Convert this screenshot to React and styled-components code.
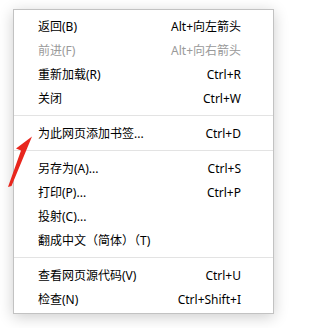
import React from "react";
import styled, { createGlobalStyle } from "styled-components";

const Global = createGlobalStyle`
  html, body { margin: 0; padding: 0; background: #ffffff; }
  body { font-family: "Noto Sans", "Noto Sans CJK SC", sans-serif; }
`;

const Stage = styled.div`
  position: relative;
  width: 285px;
  height: 328px;
  padding: 9px 0 0 13px;
  box-sizing: border-box;
  background: #ffffff;
`;

const Menu = styled.div`
  width: 261px;
  box-sizing: border-box;
  background: #ffffff;
  border: 1px solid #c2c2c2;
  box-shadow: 0 3px 14px rgba(0, 0, 0, 0.2);
  padding: 4px 0 2px 0;
  display: flex;
  flex-direction: column;
`;

const Item = styled.div`
  height: 24px;
  display: flex;
  align-items: center;
  justify-content: space-between;
  padding: 0 32px 0 24px;
  font-size: 12px;
  color: ${(p) => (p.$disabled ? "#9a9a9a" : "#000000")};
  white-space: nowrap;
`;

const Label = styled.span``;
const Shortcut = styled.span``;

const Separator = styled.div`
  height: 11px;
  display: flex;
  align-items: center;
  &::before {
    content: "";
    flex: 1;
    height: 1px;
    background: #e3e3e3;
  }
`;

const Arrow = styled.svg`
  position: absolute;
  left: 0;
  top: 0;
  pointer-events: none;
`;

const groups = [
  [
    ["返回(B)", "Alt+向左箭头"],
    ["前进(F)", "Alt+向右箭头", true],
    ["重新加载(R)", "Ctrl+R"],
    ["关闭", "Ctrl+W"],
  ],
  [["为此网页添加书签...", "Ctrl+D"]],
  [
    ["另存为(A)...", "Ctrl+S"],
    ["打印(P)...", "Ctrl+P"],
    ["投射(C)...", ""],
    ["翻成中文（简体）（T)", ""],
  ],
  [
    ["查看网页源代码(V)", "Ctrl+U"],
    ["检查(N)", "Ctrl+Shift+I"],
  ],
];

export default function App() {
  return (
    <>
      <Global />
      <Stage>
        <Menu>
          {groups.map((g, gi) => (
            <React.Fragment key={gi}>
              {gi > 0 && <Separator />}
              {g.map(([l, s, d]) => (
                <Item key={l} $disabled={d}>
                  <Label>{l}</Label>
                  <Shortcut>{s}</Shortcut>
                </Item>
              ))}
            </React.Fragment>
          ))}
        </Menu>
        <Arrow width="285" height="328" viewBox="0 0 285 328">
          <path d="M32 136.5 L16 148.5 L21 150.5 L8 187 L11.5 186 Z" fill="#e8261d" />
        </Arrow>
      </Stage>
    </>
  );
}
